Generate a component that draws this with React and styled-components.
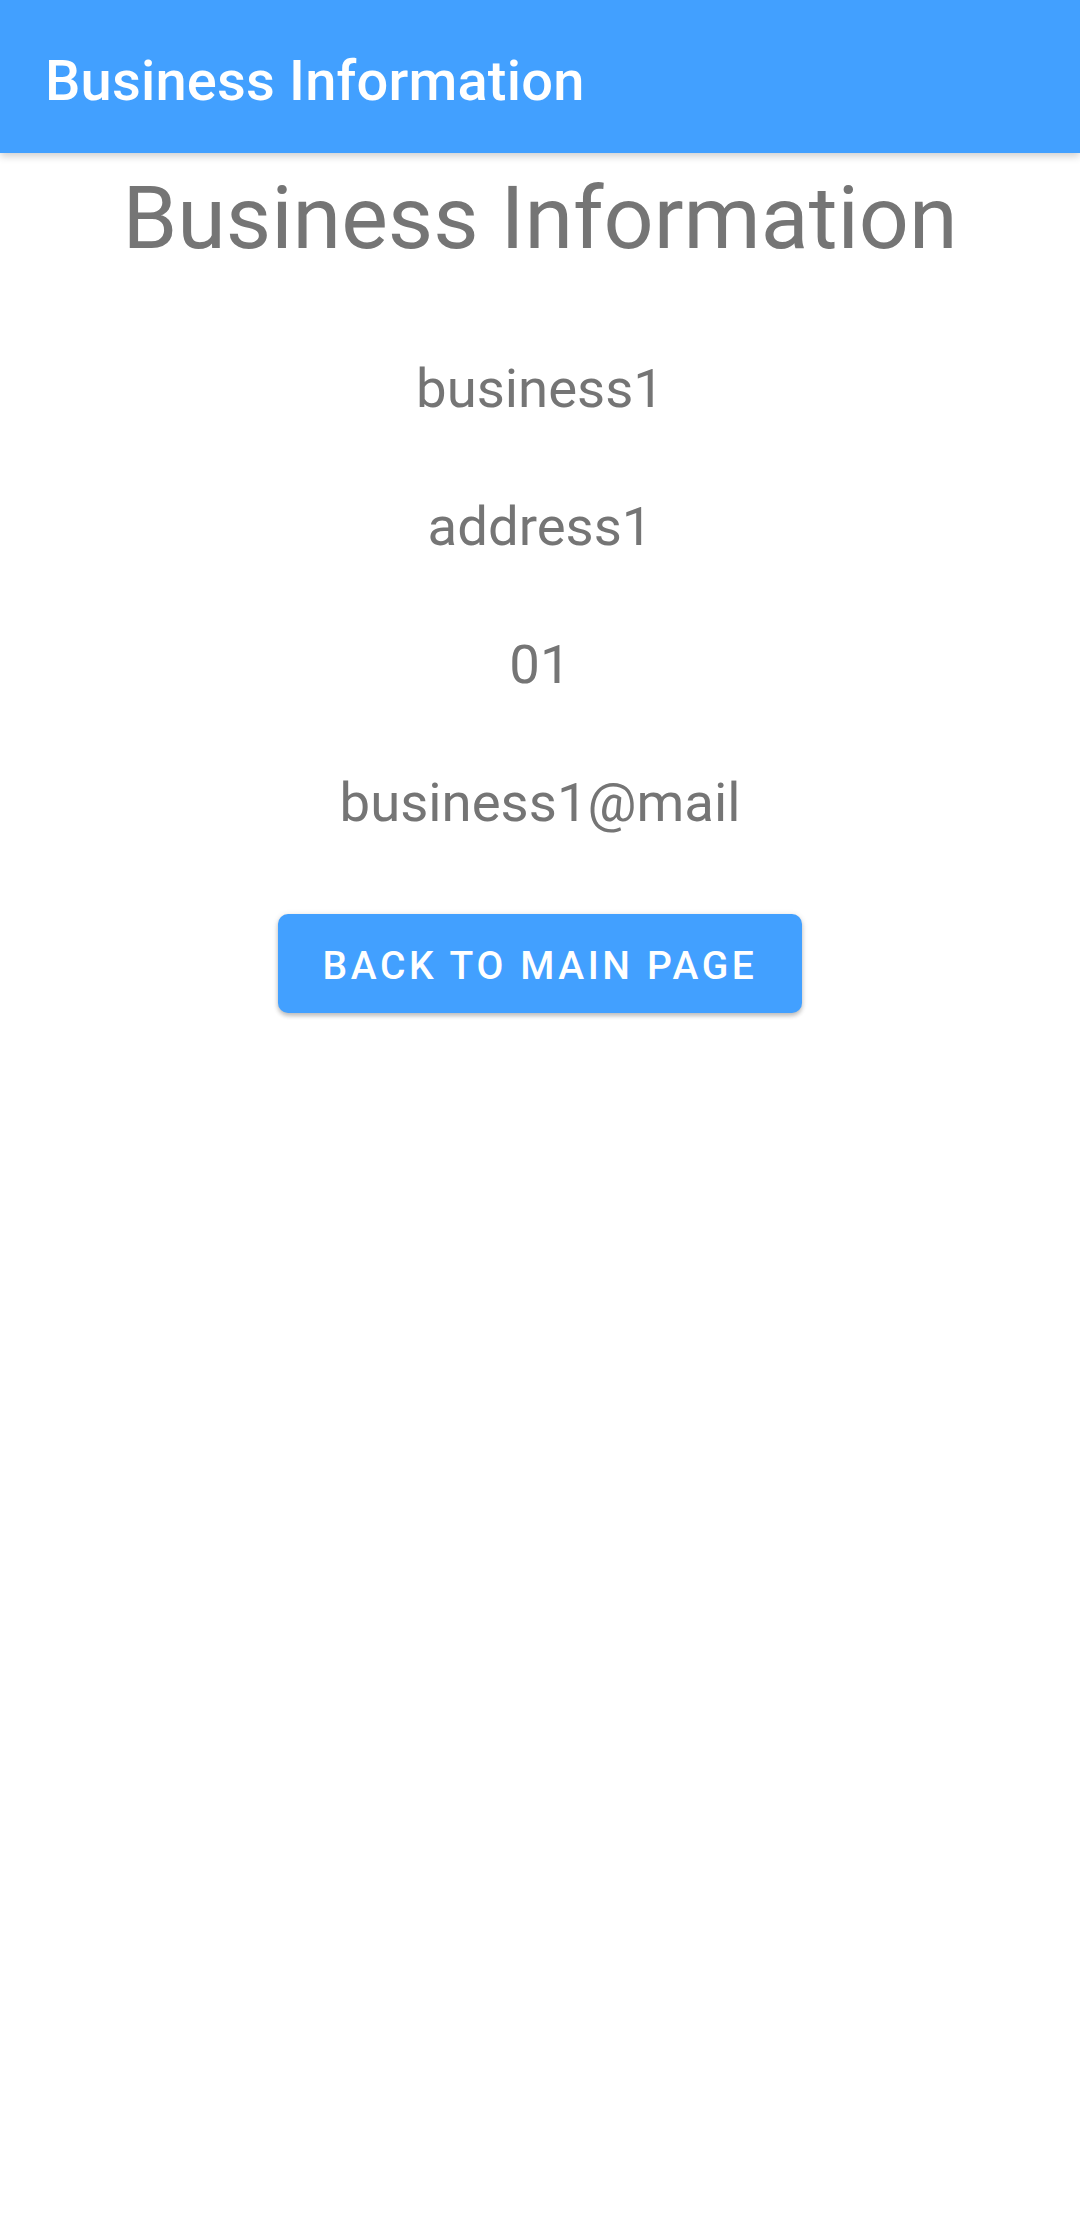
import React from "react";
import styled, { createGlobalStyle } from "styled-components";

const Global = createGlobalStyle`
  html, body { margin: 0; padding: 0; background: #ffffff; }
  body { font-family: Roboto, "Noto Sans", sans-serif; }
`;

const Screen = styled.div`
  width: 1080px;
  min-height: 2220px;
  background: #ffffff;
  display: flex;
  flex-direction: column;
`;

const AppBar = styled.header`
  height: 153px;
  box-sizing: border-box;
  background: #42a0ff;
  display: flex;
  align-items: center;
  padding: 8px 45px 0;
  box-shadow: 0 3px 8px rgba(0, 0, 0, 0.2);
  position: relative;
  z-index: 1;
`;

const AppTitle = styled.h1`
  margin: 0;
  font-family: Roboto, sans-serif;
  font-weight: 500;
  font-size: 56px;
  color: #ffffff;
  line-height: 1;
  letter-spacing: 0.2px;
`;

const Content = styled.main`
  display: flex;
  flex-direction: column;
  align-items: center;
  padding-top: 12px;
`;

const Heading = styled.h2`
  margin: 0 0 85px;
  font-family: Roboto, sans-serif;
  font-weight: 400;
  font-size: 88px;
  line-height: 1.2;
  color: #757575;
`;

const InfoList = styled.div`
  display: flex;
  flex-direction: column;
  align-items: center;
  gap: 73px;
`;

const InfoText = styled.p`
  margin: 0;
  font-family: Roboto, sans-serif;
  font-weight: 400;
  font-size: 54.5px;
  line-height: 65px;
  color: #757575;
`;

const Button = styled.button`
  margin-top: 79px;
  width: 524px;
  height: 99px;
  box-sizing: border-box;
  padding: 6px 0 0;
  border: none;
  border-radius: 10px;
  background: #42a0ff;
  color: #ffffff;
  font-family: Roboto, sans-serif;
  font-weight: 500;
  font-size: 39px;
  letter-spacing: 3.6px;
  text-transform: uppercase;
  box-shadow: 0 3px 4px rgba(0, 0, 0, 0.2), 0 1px 6px rgba(0, 0, 0, 0.12);
  cursor: pointer;
`;

const info = ["business1", "address1", "01", "business1@mail"];

export default function App() {
  return (
    <>
      <Global />
      <Screen>
        <AppBar>
          <AppTitle>Business Information</AppTitle>
        </AppBar>
        <Content>
          <Heading>Business Information</Heading>
          <InfoList>
            {info.map((t) => (
              <InfoText key={t}>{t}</InfoText>
            ))}
          </InfoList>
          <Button>Back to main page</Button>
        </Content>
      </Screen>
    </>
  );
}
